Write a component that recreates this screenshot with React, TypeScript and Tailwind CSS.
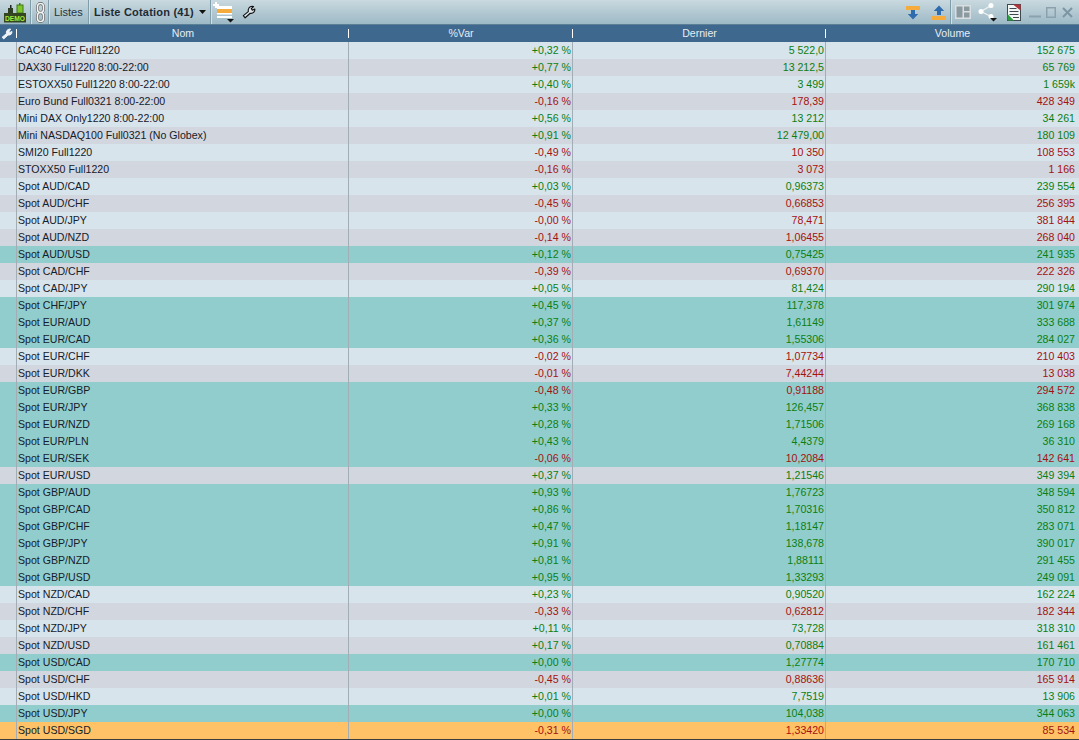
import React from "react";

type Row = [string, string, string, string];
const rows: Row[] = [
  ["CAC40 FCE Full1220", "+0,32 %", "5 522,0", "152 675"],
  ["DAX30 Full1220 8:00-22:00", "+0,77 %", "13 212,5", "65 769"],
  ["ESTOXX50 Full1220 8:00-22:00", "+0,40 %", "3 499", "1 659k"],
  ["Euro Bund Full0321 8:00-22:00", "-0,16 %", "178,39", "428 349"],
  ["Mini DAX Only1220 8:00-22:00", "+0,56 %", "13 212", "34 261"],
  ["Mini NASDAQ100 Full0321 (No Globex)", "+0,91 %", "12 479,00", "180 109"],
  ["SMI20 Full1220", "-0,49 %", "10 350", "108 553"],
  ["STOXX50 Full1220", "-0,16 %", "3 073", "1 166"],
  ["Spot AUD/CAD", "+0,03 %", "0,96373", "239 554"],
  ["Spot AUD/CHF", "-0,45 %", "0,66853", "256 395"],
  ["Spot AUD/JPY", "-0,00 %", "78,471", "381 844"],
  ["Spot AUD/NZD", "-0,14 %", "1,06455", "268 040"],
  ["Spot AUD/USD", "+0,12 %", "0,75425", "241 935"],
  ["Spot CAD/CHF", "-0,39 %", "0,69370", "222 326"],
  ["Spot CAD/JPY", "+0,05 %", "81,424", "290 194"],
  ["Spot CHF/JPY", "+0,45 %", "117,378", "301 974"],
  ["Spot EUR/AUD", "+0,37 %", "1,61149", "333 688"],
  ["Spot EUR/CAD", "+0,36 %", "1,55306", "284 027"],
  ["Spot EUR/CHF", "-0,02 %", "1,07734", "210 403"],
  ["Spot EUR/DKK", "-0,01 %", "7,44244", "13 038"],
  ["Spot EUR/GBP", "-0,48 %", "0,91188", "294 572"],
  ["Spot EUR/JPY", "+0,33 %", "126,457", "368 838"],
  ["Spot EUR/NZD", "+0,28 %", "1,71506", "269 168"],
  ["Spot EUR/PLN", "+0,43 %", "4,4379", "36 310"],
  ["Spot EUR/SEK", "-0,06 %", "10,2084", "142 641"],
  ["Spot EUR/USD", "+0,37 %", "1,21546", "349 394"],
  ["Spot GBP/AUD", "+0,93 %", "1,76723", "348 594"],
  ["Spot GBP/CAD", "+0,86 %", "1,70316", "350 812"],
  ["Spot GBP/CHF", "+0,47 %", "1,18147", "283 071"],
  ["Spot GBP/JPY", "+0,91 %", "138,678", "390 017"],
  ["Spot GBP/NZD", "+0,81 %", "1,88111", "291 455"],
  ["Spot GBP/USD", "+0,95 %", "1,33293", "249 091"],
  ["Spot NZD/CAD", "+0,23 %", "0,90520", "162 224"],
  ["Spot NZD/CHF", "-0,33 %", "0,62812", "182 344"],
  ["Spot NZD/JPY", "+0,11 %", "73,728", "318 310"],
  ["Spot NZD/USD", "+0,17 %", "0,70884", "161 461"],
  ["Spot USD/CAD", "+0,00 %", "1,27774", "170 710"],
  ["Spot USD/CHF", "-0,45 %", "0,88636", "165 914"],
  ["Spot USD/HKD", "+0,01 %", "7,7519", "13 906"],
  ["Spot USD/JPY", "+0,00 %", "104,038", "344 063"],
  ["Spot USD/SGD", "-0,31 %", "1,33420", "85 534"],
];

const teal = new Set([
  "Spot AUD/USD", "Spot CHF/JPY", "Spot EUR/AUD", "Spot EUR/CAD", "Spot EUR/GBP", "Spot EUR/JPY",
  "Spot EUR/NZD", "Spot EUR/PLN", "Spot EUR/SEK", "Spot GBP/AUD", "Spot GBP/CAD", "Spot GBP/CHF",
  "Spot GBP/JPY", "Spot GBP/NZD", "Spot GBP/USD", "Spot USD/CAD", "Spot USD/JPY",
]);

const wrenchPath =
  "M1.5 12.2 L7.2 7.6 C6.6 4.4 8.2 1.6 11.6 1.4 L13.2 1.7 L10.6 4.2 L11.8 6 L14.6 4.6 C15 7.8 12.6 10 9.4 9.4 L3.6 14.6 Z";

function Wrench({ className, light }: { className?: string; light?: boolean }) {
  return (
    <svg viewBox="0 0 16 16" className={className}>
      <path
        d={wrenchPath}
        fill={light ? "#eef3f6" : "#dfe8ec"}
        stroke={light ? "#eef3f6" : "#111"}
        strokeWidth="1.3"
        strokeLinejoin="round"
      />
    </svg>
  );
}

function Sep() {
  return <div className="h-full w-[2px] shrink-0 bg-[#7f9cab] border-r border-[#d4e0e5]" />;
}

export default function App() {
  return (
    <div className="w-[1079px] h-[740px] overflow-hidden bg-[#3c3c3c] font-['Liberation_Sans',Arial,sans-serif] text-[10.6px] leading-[17px]">
      <div className="h-[25px] flex items-center bg-gradient-to-b from-[#c9d9df] to-[#9db9c6] text-[#1c2a33] text-[11px] border-b border-[#5b7f95]">
        <div className="w-[30px] h-full flex items-center justify-center">
          <svg width="26" height="22" viewBox="0 0 26 22">
            <rect x="6" y="7" width="5" height="5" fill="#2f3f25" />
            <rect x="8" y="4" width="1.500" height="3" fill="#222" />
            <rect x="15" y="4" width="6" height="8" fill="#7ec52c" stroke="#3f7a16" />
            <rect x="17" y="2" width="1.500" height="2" fill="#3f7a16" />
            <rect x="2" y="12" width="22" height="9.500" fill="#34461f" />
            <text x="13" y="19.500" textAnchor="middle" fontSize="8" fontWeight="700" fill="#a5ea3c" fontFamily="'Liberation Sans', sans-serif" textLength="20" lengthAdjust="spacingAndGlyphs">DEMO</text>
          </svg>
        </div>
        <Sep />
        <div className="w-[16px] h-full flex items-center justify-center">
          <svg width="11" height="21" viewBox="0 0 11 21" fill="none" stroke="#f4f6f6" strokeWidth="1.600">
            <rect x="2.500" y="1.500" width="6" height="9" rx="3" stroke="#555" strokeWidth="2.800" />
            <rect x="2.500" y="10.500" width="6" height="9" rx="3" stroke="#555" strokeWidth="2.800" />
            <rect x="2.500" y="1.500" width="6" height="9" rx="3" />
            <rect x="2.500" y="10.500" width="6" height="9" rx="3" />
          </svg>
        </div>
        <Sep />
        <div className="w-[38px] h-full flex items-center pl-[4px] text-[#26343d]">Listes</div>
        <Sep />
        <div className="w-[120px] h-full flex items-center pl-[4px] gap-[5px] font-bold text-[#1f2b33] tracking-[0.2px]">
          <span>Liste Cotation (41)</span>
          <svg width="7" height="4" viewBox="0 0 7 4"><path d="M0 0h7L3.500 4z" fill="#111" /></svg>
        </div>
        <Sep />
        <svg width="22" height="22" viewBox="0 0 22 22" className="ml-[1px]">
          <rect x="4" y="5" width="15" height="3" fill="#fff" />
          <rect x="4" y="8" width="15" height="4" fill="#f5ac3c" />
          <rect x="4" y="12" width="15" height="1.500" fill="#fff" />
          <rect x="4" y="15" width="15" height="2" fill="#fff" />
          <path d="M3 1v6M0 4h6" stroke="#fff" strokeWidth="2" />
          <path d="M14 18h7l-3.500 3.500z" fill="#111" />
        </svg>
        <Wrench className="ml-[7px] w-[14px] h-[14px]" />
        <div className="flex-1" />
        <svg width="14" height="15" viewBox="0 0 14 15">
          <rect x="0" y="1" width="14" height="4" fill="#f5ac3c" />
          <path d="M5 5h4v4h3.200L7 14.500 1.800 9H5z" fill="#2f6cae" />
        </svg>
        <svg width="14" height="15" viewBox="0 0 14 15" className="ml-[12px]">
          <rect x="0" y="11" width="14" height="4" fill="#f5ac3c" />
          <path d="M7 0.500l5.200 5.500H9v4H5V6H1.800z" fill="#2f6cae" />
        </svg>
        <div className="ml-[4px] h-full"><Sep /></div>
        <svg width="16" height="14" viewBox="0 0 16 14" className="ml-[3px]">
          <rect x="0" y="0" width="16" height="14" fill="#d9dfe0" />
          <rect x="1.500" y="1.500" width="6" height="11" fill="#8b9aa1" />
          <rect x="9" y="1.500" width="5.500" height="4.500" fill="#8b9aa1" />
          <rect x="9" y="7.500" width="5.500" height="5" fill="#8b9aa1" />
        </svg>
        <svg width="20" height="20" viewBox="0 0 20 20" className="ml-[7px]">
          <path d="M13 3.500L3 9.500 13 14.500" stroke="#eef3f4" strokeWidth="1.200" fill="none" />
          <circle cx="13" cy="3.500" r="2.500" fill="#fff" />
          <circle cx="3" cy="9.500" r="2.500" fill="#fff" />
          <circle cx="13" cy="14.500" r="2.500" fill="#fff" />
          <path d="M12 16h7l-3.500 3.500z" fill="#111" />
        </svg>
        <svg width="14" height="17" viewBox="0 0 14 17" className="ml-[9px]">
          <rect x="0.500" y="0.500" width="13" height="16" fill="#f4f6f6" stroke="#3c4a50" />
          <path d="M6 0.500h7.500v6z" fill="#b3333b" />
          <path d="M0.500 10l6.500 6.500H0.500z" fill="#2f9e3c" />
          <path d="M2.500 4.500h7M2.500 7.500h9M2.500 10.500h9M6 13.500h6" stroke="#3c4a50" strokeWidth="1" />
        </svg>
        <svg width="12" height="11" viewBox="0 0 12 11" className="ml-[8px]"><rect x="0" y="8.500" width="12" height="2" fill="#8ba2ae" /></svg>
        <svg width="10" height="11" viewBox="0 0 10 11" className="ml-[5px]"><rect x="0.750" y="0.750" width="8.500" height="9.500" fill="none" stroke="#8ba2ae" strokeWidth="1.500" /></svg>
        <svg width="11" height="11" viewBox="0 0 11 11" className="ml-[6px] mr-[6px]"><path d="M1 1l9 9M10 1l-9 9" stroke="#7c95a2" strokeWidth="2" /></svg>
      </div>

      <div className="h-[17px] flex bg-[#3f688f] text-[#e6edf3]">
        <div className="w-[17px] flex items-center relative">
          <Wrench className="w-[12px] h-[12px] ml-[1px]" light />
          <span className="absolute right-0 top-[4px] h-[9px] w-px bg-white" />
        </div>
        <div className="w-[332px] relative text-center">Nom<span className="absolute right-0 top-[4px] h-[9px] w-px bg-white" /></div>
        <div className="w-[224px] relative text-center">%Var<span className="absolute right-0 top-[4px] h-[9px] w-px bg-white" /></div>
        <div className="w-[253px] relative text-center">Dernier<span className="absolute right-0 top-[4px] h-[9px] w-px bg-white" /></div>
        <div className="flex-1 text-center">Volume</div>
      </div>

      <div>
        {rows.map((r, i) => {
          const bg = r[0] === "Spot USD/SGD" ? "bg-[#ffc266]" : teal.has(r[0]) ? "bg-[#92cdcd]" : i % 2 ? "bg-[#d2d6de]" : "bg-[#d8e4ec]";
          const tone = r[1].startsWith("-") ? "text-[#a3120f]" : "text-[#0b7f10]";
          return (
            <div key={r[0]} className={`h-[17px] flex ${bg}`}>
              <div className="w-[17px] border-r border-[#a2adb6]" />
              <div className="w-[332px] pl-[1px] text-[#14202a] border-r border-[#a2adb6] whitespace-nowrap">{r[0]}</div>
              <div className={`w-[224px] pr-[1px] text-right border-r border-[#a2adb6] ${tone}`}>{r[1]}</div>
              <div className={`w-[253px] pr-[1px] text-right border-r border-[#a2adb6] ${tone}`}>{r[2]}</div>
              <div className={`flex-1 pr-[4px] text-right ${tone}`}>{r[3]}</div>
            </div>
          );
        })}
      </div>
    </div>
  );
}
